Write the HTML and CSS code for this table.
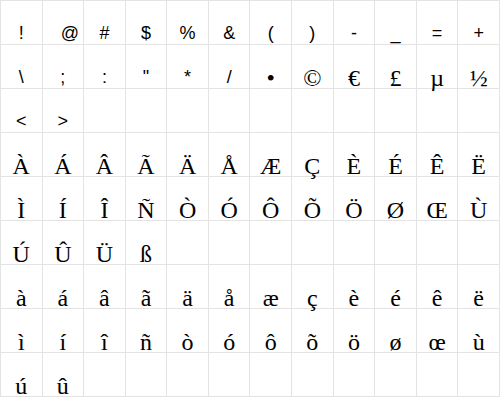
FILE: index.html
```html
<!DOCTYPE html>
<html>
<head>
<meta charset="utf-8">
<link rel="stylesheet" href="styles.css">
</head>
<body>
<div class="chart">
  <div class="cell sans">!</div><div class="cell sans at">@</div><div class="cell sans">#</div><div class="cell sans">$</div><div class="cell sans">%</div><div class="cell sans">&amp;</div><div class="cell sans">(</div><div class="cell sans">)</div><div class="cell sans">-</div><div class="cell sans">_</div><div class="cell sans">=</div><div class="cell sans">+</div>
  <div class="cell sans">\</div><div class="cell sans">;</div><div class="cell sans">:</div><div class="cell sans">"</div><div class="cell sans">*</div><div class="cell sans">/</div><div class="cell">•</div><div class="cell">©</div><div class="cell">€</div><div class="cell">£</div><div class="cell">µ</div><div class="cell">½</div>
  <div class="cell sans">&lt;</div><div class="cell sans">&gt;</div><div class="cell"></div><div class="cell"></div><div class="cell"></div><div class="cell"></div><div class="cell"></div><div class="cell"></div><div class="cell"></div><div class="cell"></div><div class="cell"></div><div class="cell"></div>
  <div class="cell">À</div><div class="cell">Á</div><div class="cell">Â</div><div class="cell">Ã</div><div class="cell">Ä</div><div class="cell">Å</div><div class="cell">Æ</div><div class="cell">Ç</div><div class="cell">È</div><div class="cell">É</div><div class="cell">Ê</div><div class="cell">Ë</div>
  <div class="cell">Ì</div><div class="cell">Í</div><div class="cell">Î</div><div class="cell">Ñ</div><div class="cell">Ò</div><div class="cell">Ó</div><div class="cell">Ô</div><div class="cell">Õ</div><div class="cell">Ö</div><div class="cell">Ø</div><div class="cell">Œ</div><div class="cell">Ù</div>
  <div class="cell">Ú</div><div class="cell">Û</div><div class="cell">Ü</div><div class="cell">ß</div><div class="cell"></div><div class="cell"></div><div class="cell"></div><div class="cell"></div><div class="cell"></div><div class="cell"></div><div class="cell"></div><div class="cell"></div>
  <div class="cell">à</div><div class="cell">á</div><div class="cell">â</div><div class="cell">ã</div><div class="cell">ä</div><div class="cell">å</div><div class="cell">æ</div><div class="cell">ç</div><div class="cell">è</div><div class="cell">é</div><div class="cell">ê</div><div class="cell">ë</div>
  <div class="cell">ì</div><div class="cell">í</div><div class="cell">î</div><div class="cell">ñ</div><div class="cell">ò</div><div class="cell">ó</div><div class="cell">ô</div><div class="cell">õ</div><div class="cell">ö</div><div class="cell">ø</div><div class="cell">œ</div><div class="cell">ù</div>
  <div class="cell">ú</div><div class="cell">û</div><div class="cell"></div><div class="cell"></div><div class="cell"></div><div class="cell"></div><div class="cell"></div><div class="cell"></div><div class="cell"></div><div class="cell"></div><div class="cell"></div><div class="cell"></div>
</div>
</body>
</html>
```

FILE: styles.css
```css
html, body {
  margin: 0;
  padding: 0;
  background: #ffffff;
}

.chart {
  width: 500px;
  box-sizing: border-box;
  display: grid;
  grid-template-columns: repeat(12, 1fr);
  grid-auto-rows: 44px;
  border-top: 1px solid #e3e3e3;
  border-left: 1px solid #e3e3e3;
  font-family: "Liberation Serif", "Times New Roman", serif;
  font-size: 24px;
  color: #000000;
}

.cell {
  box-sizing: border-box;
  border-right: 1px solid #e3e3e3;
  border-bottom: 1px solid #e3e3e3;
  padding-top: 23px;
  line-height: 20px;
  text-align: center;
  overflow: visible;
  white-space: nowrap;
}

.sans {
  font-family: "Liberation Sans", Arial, sans-serif;
  font-size: 18px;
  padding-top: 22px;
}

.at {
  padding-left: 14px;
}
```
